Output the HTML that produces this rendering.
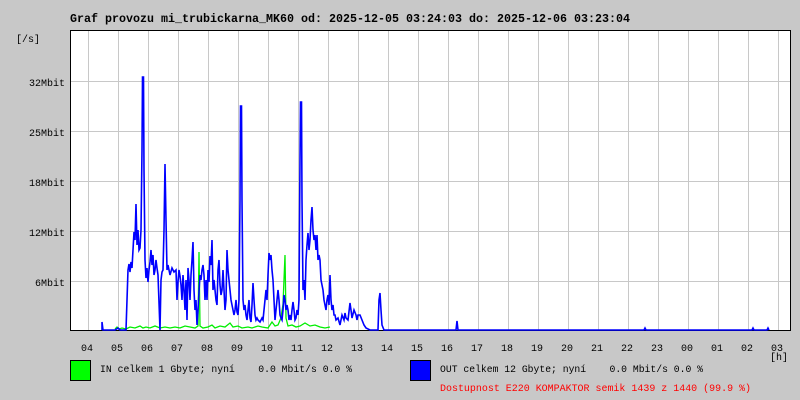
<!DOCTYPE html>
<html><head><meta charset="utf-8"><style>
html,body{margin:0;padding:0;background:#c8c8c8;width:800px;height:400px;overflow:hidden}
svg{display:block}
text{font-family:"Liberation Mono",monospace;font-size:10px;fill:#000}
</style></head><body>
<svg width="800" height="400" xmlns="http://www.w3.org/2000/svg">
<rect width="800" height="400" fill="#c8c8c8"/>
<text x="70" y="22" style="font-size:11.5px;font-weight:bold" textLength="560" lengthAdjust="spacingAndGlyphs">Graf provozu mi_trubickarna_MK60 od: 2025-12-05 03:24:03 do: 2025-12-06 03:23:04</text>
<rect x="70.5" y="30.5" width="720" height="300" fill="#fff" stroke="#000"/>
<g stroke="#c8c8c8" stroke-width="1">
<path d="M88.5 31V330M118.5 31V330M148.5 31V330M178.5 31V330M208.5 31V330M238.5 31V330M268.5 31V330M298.5 31V330M328.5 31V330M358.5 31V330M388.5 31V330M418.5 31V330M448.5 31V330M478.5 31V330M508.5 31V330M538.5 31V330M568.5 31V330M598.5 31V330M628.5 31V330M658.5 31V330M688.5 31V330M718.5 31V330M748.5 31V330M778.5 31V330"/>
<path d="M71 81.5H790M71 131.5H790M71 181.5H790M71 231.5H790M71 281.5H790"/>
</g>
<path d="M65 81.5H70M65 131.5H70M65 181.5H70M65 231.5H70M65 281.5H70" stroke="#c8c8c8"/>
<text x="16" y="42">[/s]</text>
<text x="29" y="86">32Mbit</text>
<text x="29" y="136">25Mbit</text>
<text x="29" y="186">18Mbit</text>
<text x="29" y="236">12Mbit</text>
<text x="35" y="286">6Mbit</text>
<polyline fill="none" stroke="#00ee00" stroke-width="1.3" points="115,329 117,327 119,329 122,328 126,329 130,327 135,328 140,326 143,328 146,327 150,328 155,326 160,328 165,327 170,328 175,327 180,328 185,326 190,327 195,328 198,326 199,252 200,326 203,328 208,327 212,325 215,328 220,326 225,327 230,323 233,327 238,326 242,328 248,327 252,328 258,326 262,327 268,328 272,322 275,326 278,325 281,318 283,304 285,255 286,318 288,326 292,325 296,327 300,326 305,323 310,326 315,325 320,327 325,328 330,327"/>
<polyline fill="none" stroke="#0000ff" stroke-width="1.6" points="102,330 102,322 103,330 115,330 118,328 120,330 126,330 127,300 128,270 129,264 130,272 131,262 132,268 133,250 134,232 135,240 136,204 137,245 138,230 139,250 140,248 141,230 142,150 142.5,77 143.5,77 144,170 145,260 146,278 147,268 148,282 149,270 150,262 151,250 152,265 153,255 154,275 155,270 156,260 157,268 158,275 160,330 161,280 162,272 163,270 164,230 165,164 166,220 167,270 168,265 170,275 172,268 174,272 176,270 177,300 178,282 179,270 180,276 181,285 182,300 183,275 184,290 185,310 186,280 187,320 188,268 189,280 190,300 191,275 192,260 193,242 194,290 195,310 196,300 197,325 198,310 199,292 200,275 201,280 202,270 203,265 204,275 205,300 206,280 207,300 208,270 209,282 210,256 211,265 212,240 213,290 214,280 215,290 216,300 217,305 218,270 219,260 220,285 221,295 222,290 223,270 225,310 226,300 227,250 228,270 229,280 230,290 231,300 232,305 234,315 235,310 236,300 237,312 238,315 239,300 240,200 240.5,106 241.5,106 242,200 243,300 244,310 245,305 246,315 247,320 248,310 249,300 250,318 251,322 252,305 253,283 254,300 255,315 256,320 257,318 258,320 260,322 262,318 263,320 264,310 265,300 266,290 267,300 268,275 269,253 270,260 271,255 272,270 273,280 274,300 275,320 276,310 277,300 278,290 279,300 280,315 281,318 282,320 283,310 284,295 285,300 286,310 287,305 288,310 289,320 290,315 291,320 292,310 293,302 294,310 295,320 296,318 297,310 298,315 299,300 300,160 300.5,102 301.5,102 302,200 303,290 304,280 305,300 306,260 307,245 308,233 309,250 310,240 311,220 312,207 313,230 314,240 315,235 316,250 317,235 318,260 319,255 320,260 321,280 322,285 323,290 324,300 325,305 326,310 327,300 328,295 329,305 330,275 331,300 332,310 333,305 334,315 335,315 336,320 338,318 340,325 342,315 344,320 345,313 346,318 348,320 350,303 351,310 352,318 354,310 356,315 357,320 358,315 360,315 362,320 364,325 366,328 370,330 378,330 379,300 380,293 381,310 382,325 384,330 456,330 457,321 458,330 644,330 645,328 646,330 752,330 753,328 754,330 767,330 768,328 769,330"/>
<text x="81" y="351">04</text><text x="111" y="351">05</text><text x="141" y="351">06</text><text x="171" y="351">07</text><text x="201" y="351">08</text><text x="231" y="351">09</text><text x="261" y="351">10</text><text x="291" y="351">11</text><text x="321" y="351">12</text><text x="351" y="351">13</text><text x="381" y="351">14</text><text x="411" y="351">15</text><text x="441" y="351">16</text><text x="471" y="351">17</text><text x="501" y="351">18</text><text x="531" y="351">19</text><text x="561" y="351">20</text><text x="591" y="351">21</text><text x="621" y="351">22</text><text x="651" y="351">23</text><text x="681" y="351">00</text><text x="711" y="351">01</text><text x="741" y="351">02</text><text x="771" y="351">03</text>
<text x="770" y="360">[h]</text>
<rect x="70.5" y="360.5" width="20" height="20" fill="#00ff00" stroke="#000"/>
<text x="100" y="372" textLength="252" lengthAdjust="spacingAndGlyphs" style="white-space:pre" xml:space="preserve">IN celkem 1 Gbyte; nyní    0.0 Mbit/s 0.0 %</text>
<rect x="410.5" y="360.5" width="20" height="20" fill="#0000ff" stroke="#000"/>
<text x="440" y="372" textLength="263" lengthAdjust="spacingAndGlyphs" xml:space="preserve">OUT celkem 12 Gbyte; nyní    0.0 Mbit/s 0.0 %</text>
<text x="440" y="391" style="fill:#ff0000" textLength="311" lengthAdjust="spacingAndGlyphs">Dostupnost E220 KOMPAKTOR semik 1439 z 1440 (99.9 %)</text>
</svg>
</body></html>
